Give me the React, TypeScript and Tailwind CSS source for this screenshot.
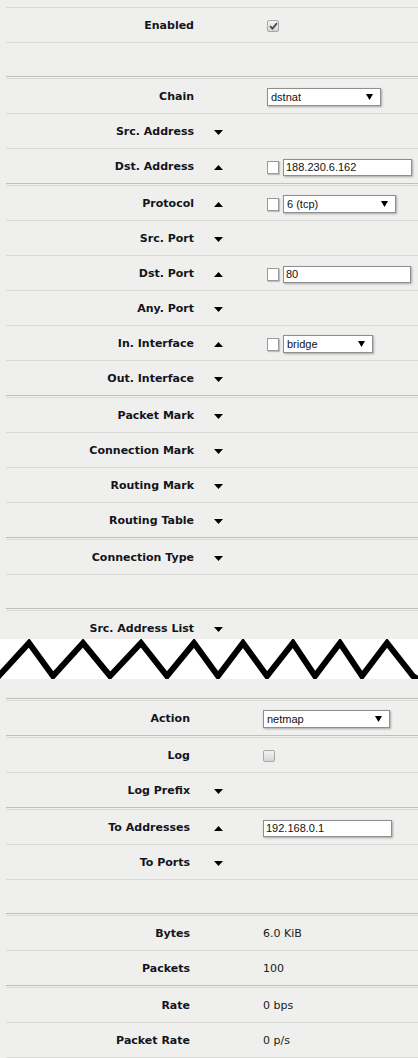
import type { ReactNode } from "react";

function Arrow({ up }: { up?: boolean }) {
  return (
    <svg width="9" height="5" viewBox="0 0 9 5" className="block">
      <path d={up ? "M0 5 L4.5 0 L9 5 Z" : "M0 0 L9 0 L4.5 5 Z"} fill="#000" />
    </svg>
  );
}

function Sep() {
  return <div className="h-[3px] border-t border-b border-t-[#bfc0be] border-b-[#d9dad8]" />;
}

interface RowProps {
  name: string;
  arrow?: "up" | "down";
  line?: boolean;
  top?: boolean;
  children?: ReactNode;
}

function Row({ name, arrow, line = true, top = true, children }: RowProps) {
  return (
    <div className={`flex items-center pt-[2px] ${line ? "h-[35px] border-b border-[#d9dad8]" : "h-[34px]"}`}>
      <div className={`${top ? "w-[188px]" : "w-[184px]"} shrink-0 text-right font-bold text-[11px] text-[#14141c] whitespace-nowrap`}>
        {name}
      </div>
      <div className={`w-[73px] shrink-0 ${top ? "pl-[20px]" : "pl-[24px]"}`}>
        {arrow && <Arrow up={arrow === "up"} />}
      </div>
      <div className="flex items-center gap-[4px]">{children}</div>
    </div>
  );
}

function Select({ value, w }: { value: string; w: string }) {
  return (
    <div className={`${w} h-[18px] flex items-center justify-between bg-white border border-[#8e8e8e] shadow-[1px_1px_2px_rgba(0,0,0,0.3)] pl-[3px] pr-[7px] font-['Liberation_Sans',Arial,sans-serif] text-[11px] text-[#111]`}>
      <span>{value}</span>
      <svg width="7" height="6" viewBox="0 0 7 6" className="block">
        <path d="M0 0 L7 0 L3.5 6 Z" fill="#000" />
      </svg>
    </div>
  );
}

function Input({ value, w }: { value: string; w: string }) {
  return (
    <div className={`${w} h-[17px] flex items-center bg-white border border-[#8e8e8e] shadow-[1px_1px_2px_rgba(0,0,0,0.3)] pl-[2px] font-['Liberation_Sans',Arial,sans-serif] text-[11px] text-[#111]`}>
      {value}
    </div>
  );
}

function Box() {
  return <div className="w-[12px] h-[13px] bg-white border border-[#9a9a9a] shadow-[1px_1px_1px_rgba(0,0,0,0.2)]" />;
}

function Check({ on }: { on?: boolean }) {
  return (
    <div className="w-[12px] h-[12px] rounded-[2px] border border-[#a7a7a7] bg-gradient-to-b from-[#f4f4f4] to-[#d6d6d6] flex items-center justify-center">
      {on && (
        <svg width="9" height="8" viewBox="0 0 9 8">
          <path d="M1 4.2 L3.4 6.6 L8 1.2" stroke="#4a4a4a" strokeWidth="1.8" fill="none" />
        </svg>
      )}
    </div>
  );
}

function Value({ text }: { text: string }) {
  return <span className="text-[11px] text-[#1a1a1a]">{text}</span>;
}

export default function App() {
  return (
    <div className="min-h-screen bg-[#eff0ee] font-['DejaVu_Sans',Verdana,sans-serif] pt-[7px]">
      <div className="pl-[6px]">
        <div className="border-t border-[#d9dad8]" />
        <Row name="Enabled">
          <Check on />
        </Row>
        <div className="h-[33px]" />
        <Sep />
        <Row name="Chain">
          <Select value="dstnat" w="w-[114px]" />
        </Row>
        <Row name="Src. Address" arrow="down" />
        <Row name="Dst. Address" arrow="up" line={false}>
          <Box />
          <Input value="188.230.6.162" w="w-[129px]" />
        </Row>
        <Sep />
        <Row name="Protocol" arrow="up">
          <Box />
          <Select value="6 (tcp)" w="w-[113px]" />
        </Row>
        <Row name="Src. Port" arrow="down" />
        <Row name="Dst. Port" arrow="up">
          <Box />
          <Input value="80" w="w-[128px]" />
        </Row>
        <Row name="Any. Port" arrow="down" />
        <Row name="In. Interface" arrow="up">
          <Box />
          <Select value="bridge" w="w-[90px]" />
        </Row>
        <Row name="Out. Interface" arrow="down" line={false} />
        <Sep />
        <Row name="Packet Mark" arrow="down" />
        <Row name="Connection Mark" arrow="down" />
        <Row name="Routing Mark" arrow="down" />
        <Row name="Routing Table" arrow="down" line={false} />
        <Sep />
        <Row name="Connection Type" arrow="down" />
        <div className="h-[33px]" />
        <Sep />
        <Row name="Src. Address List" arrow="down" line={false} />
      </div>

      <div className="relative -mt-[6px] h-[40px] bg-white">
        <svg width="418" height="40" viewBox="0 0 418 40" className="block">
          <polyline
            points="-4,40 29,4 53,37 83,4 110,37 141,4 167,37 194,4 218,37 243,4 267,37 293,4 315,37 340,4 362,37 387,4 413,37 424,44"
            fill="none"
            stroke="#000"
            strokeWidth="6"
            strokeLinejoin="miter"
          />
        </svg>
      </div>
      <div className="h-[19px]" />

      <div className="pl-[6px]">
        <Sep />
        <Row name="Action" top={false} line={false}>
          <Select value="netmap" w="w-[127px]" />
        </Row>
        <Sep />
        <Row name="Log" top={false}>
          <Check />
        </Row>
        <Row name="Log Prefix" arrow="down" top={false} line={false} />
        <Sep />
        <Row name="To Addresses" arrow="up" top={false}>
          <Input value="192.168.0.1" w="w-[129px]" />
        </Row>
        <Row name="To Ports" arrow="down" top={false} />
        <div className="h-[33px]" />
        <Sep />
        <Row name="Bytes" top={false}>
          <Value text="6.0 KiB" />
        </Row>
        <Row name="Packets" top={false} line={false}>
          <Value text="100" />
        </Row>
        <Sep />
        <Row name="Rate" top={false}>
          <Value text="0 bps" />
        </Row>
        <Row name="Packet Rate" top={false}>
          <Value text="0 p/s" />
        </Row>
      </div>
    </div>
  );
}
